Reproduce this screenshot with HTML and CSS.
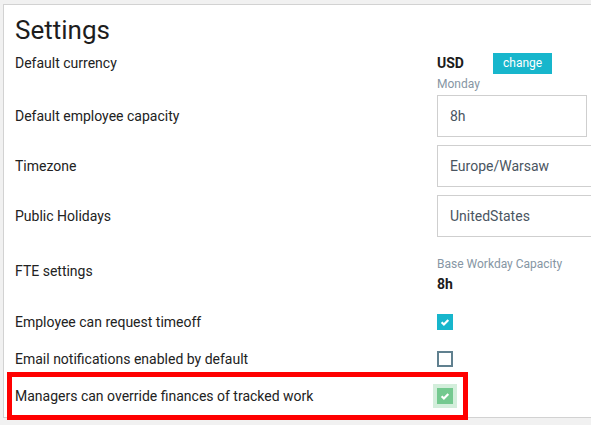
FILE: index.html
```html
<!DOCTYPE html>
<html lang="en">
<head>
  <meta charset="UTF-8" />
  <title>Settings</title>
  <link rel="stylesheet" href="styles.css">
</head>
<body>

  <div class="card">
    <h1 class="title">Settings</h1>

    <div class="row row-currency">
      <div class="label">Default currency</div>
      <div class="value">
        <span class="code">USD</span>
        <button class="btn-change">change</button>
      </div>
    </div>

    <div class="row row-field">
      <div class="label">Default employee capacity</div>
      <div class="value">
        <div class="caption">Monday</div>
        <div class="input short">8h</div>
      </div>
    </div>

    <div class="row row-field spaced">
      <div class="label">Timezone</div>
      <div class="value"><div class="input wide">Europe/Warsaw</div></div>
    </div>

    <div class="row row-field spaced">
      <div class="label">Public Holidays</div>
      <div class="value"><div class="input wide">UnitedStates</div></div>
    </div>

    <div class="row row-fte">
      <div class="label">FTE settings</div>
      <div class="value">
        <div class="caption">Base Workday Capacity</div>
        <div class="strong">8h</div>
      </div>
    </div>

    <div class="row row-check first">
      <div class="label">Employee can request timeoff</div>
      <div class="value">
        <span class="checkbox checked">
          <svg viewBox="0 0 16 16"><path d="M4.6 8.2l2.3 2.3 4.4-4.6" /></svg>
        </span>
      </div>
    </div>

    <div class="row row-check">
      <div class="label">Email notifications enabled by default</div>
      <div class="value"><span class="checkbox"></span></div>
    </div>

    <div class="row row-check">
      <div class="label">Managers can override finances of tracked work</div>
      <div class="value">
        <span class="checkbox checked focus">
          <svg viewBox="0 0 16 16"><path d="M4.6 8.2l2.3 2.3 4.4-4.6" /></svg>
        </span>
      </div>
    </div>
  </div>

  <!-- highlight frame around the last option -->
  <div class="highlight"></div>

</body>
</html>
```

FILE: styles.css
```css
* { box-sizing: border-box; }
html, body {
  height: 100%;
}
body {
  margin: 0;
  position: relative;
  overflow: hidden;
  background-color: #f1f1f1;
  font-family: Roboto, "Liberation Sans", sans-serif;
  color: #222;
  padding: 4px 0 0 3px;
}
.card {
  overflow: hidden;
  background: white;
  border: 1px solid #d2d2d2;
  border-right: none;
  padding: 10px 0 3px 11px;
}
.title {
  margin: 0 0 7px;
  font-size: 26px;
  line-height: 30px;
  font-weight: 400;
  color: #1d1d1d;
}
.row {
  display: grid;
  grid-template-columns: 422px 1fr;
}
.label {
  font-size: 14px;
  line-height: 16px;
}
.row-currency {
  height: 22px;
  align-items: center;
}
.row-currency .value {
  display: flex;
  align-items: center;
}
.code {
  width: 56px;
  font-size: 14px;
  font-weight: bold;
  color: #1b1b1b;
}
.btn-change {
  height: 21px;
  padding: 0 10px;
  border: none;
  background-color: #17b6cc;
  color: white;
  font-family: inherit;
  font-size: 12px;
}
.caption {
  font-size: 12px;
  line-height: 14px;
  color: #8696a4;
}
.row-field {
  align-items: end;
}
.row-field .label {
  line-height: 42px;
}
.row-field .caption {
  margin: 3px 0 4px;
}
.row-field.spaced {
  margin-top: 8px;
}
.input {
  height: 42px;
  display: flex;
  align-items: center;
  padding-left: 12px;
  border: 1px solid #cfcfcf;
  font-size: 14px;
  color: #4a5561;
}
.input.short { width: 150px; }
.input.wide { width: 200px; }
.row-fte {
  padding-top: 20px;
  align-items: start;
}
.row-fte .label {
  margin-top: 6px;
}
.strong {
  margin-top: 5px;
  font-size: 14px;
  line-height: 16px;
  font-weight: bold;
  color: #1b1b1b;
}
.row-check {
  height: 37px;
  align-items: center;
}
.row-check.first {
  margin-top: 11px;
}
.row-check .value {
  display: flex;
  align-items: center;
  padding-left: 4px;
  margin-left: -4px;
}
.checkbox {
  width: 16px;
  height: 16px;
  display: inline-block;
  border: 2px solid #60808f;
}
.checkbox.checked {
  border: none;
  background-color: #17b6cc;
}
.checkbox.focus {
  background-color: #74c98f;
  box-shadow: 0 0 0 4px #d3eedb;
}
.checkbox svg {
  display: block;
  width: 16px;
  height: 16px;
  fill: none;
  stroke: white;
  stroke-width: 2.2;
}
.highlight {
  position: absolute;
  left: 7px;
  top: 372px;
  width: 461px;
  height: 48px;
  border: 5px solid #ff0000;
}
```
